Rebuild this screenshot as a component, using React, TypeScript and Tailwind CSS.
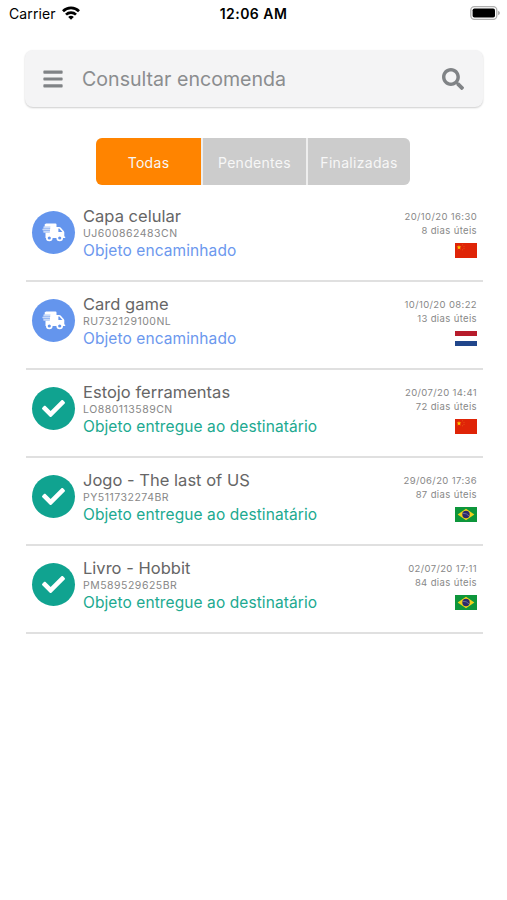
import { FaBars, FaCheck, FaSearch } from "react-icons/fa";

type Country = "CN" | "NL" | "BR";

interface Parcel {
  name: string;
  code: string;
  delivered: boolean;
  date: string;
  days: string;
  country: Country;
}

const parcels: Parcel[] = [
  { name: "Capa celular", code: "UJ600862483CN", delivered: false, date: "20/10/20 16:30", days: "8 dias úteis", country: "CN" },
  { name: "Card game", code: "RU732129100NL", delivered: false, date: "10/10/20 08:22", days: "13 dias úteis", country: "NL" },
  { name: "Estojo ferramentas", code: "LO880113589CN", delivered: true, date: "20/07/20 14:41", days: "72 dias úteis", country: "CN" },
  { name: "Jogo - The last of US", code: "PY511732274BR", delivered: true, date: "29/06/20 17:36", days: "87 dias úteis", country: "BR" },
  { name: "Livro - Hobbit", code: "PM589529625BR", delivered: true, date: "02/07/20 17:11", days: "84 dias úteis", country: "BR" },
];

function Flag({ country }: { country: Country }) {
  return (
    <svg viewBox="0 0 22 15" className="h-[15px] w-[22px]">
      {country === "CN" && (
        <>
          <rect width="22" height="15" fill="#df2407" />
          <path d="M4 2l.6 1.6h1.7L5 4.7l.5 1.7L4 5.4 2.5 6.4 3 4.7 1.7 3.6h1.7z" fill="#ffc800" />
          <g fill="#e8601a">
            <circle cx="7.6" cy="1.8" r=".5" />
            <circle cx="9" cy="3.2" r=".5" />
            <circle cx="9" cy="5.2" r=".5" />
            <circle cx="7.6" cy="6.8" r=".5" />
          </g>
        </>
      )}
      {country === "NL" && (
        <>
          <rect width="22" height="15" fill="#fff" />
          <rect width="22" height="5" fill="#b71c2c" />
          <rect y="10" width="22" height="5" fill="#21468b" />
        </>
      )}
      {country === "BR" && (
        <>
          <rect width="22" height="15" fill="#0d963b" />
          <path d="M11 1.7L19.4 7.5 11 13.3 2.6 7.5z" fill="#f0d01c" />
          <circle cx="11" cy="7.5" r="3.7" fill="#2b2a6c" />
          <path d="M7.8 6.3q3.8-.3 6.3 2.7" fill="none" stroke="#a9a9c8" strokeWidth=".5" />
        </>
      )}
    </svg>
  );
}

function TruckIcon() {
  return (
    <svg viewBox="0 0 24 19" className="h-[19px] w-[24px]" fill="#fff">
      <path d="M4 .5h9.5a1 1 0 0 1 1 1V4h2.7a2 2 0 0 1 1.4.6l3.1 3.3a2 2 0 0 1 .6 1.4v4.2h.3a.7.7 0 0 1 0 1.5H3.5V9.5L2.6 1.5z" />
      <path d="M.8 3.4h7.6l-.8 6.3H1z" fill="#6495ed" />
      <g opacity=".65">
        <rect x="1.4" y="3.3" width="7.6" height="1.9" rx=".8" />
        <rect x=".4" y="5.6" width="7.8" height="1.9" rx=".8" />
        <rect x="1.2" y="7.9" width="6.8" height="1.9" rx=".8" />
      </g>
      <path d="M16.4 5.6h.9l3.1 3.3h-4z" fill="#6495ed" />
      <circle cx="7.3" cy="15" r="3.3" />
      <circle cx="17.7" cy="15" r="3.3" />
      <circle cx="7.3" cy="15" r="1.6" fill="#6495ed" />
      <circle cx="17.7" cy="15" r="1.6" fill="#6495ed" />
    </svg>
  );
}

function StatusBar() {
  return (
    <header className="grid h-[27px] grid-cols-3 items-center pr-[7px] pl-[9px] text-black">
      <div className="flex items-center gap-[6px]">
        <span className="text-[14px] tracking-[0.1px]">Carrier</span>
        <svg viewBox="0 0 18 14" className="mb-[2px] h-[14px] w-[18px]" fill="none" stroke="#000" strokeWidth="2.7">
          <path d="M1 5.2a11.4 11.4 0 0 1 16 0" />
          <path d="M4 8.6a7.1 7.1 0 0 1 10 0" />
          <path d="M9 13.8L6.2 11a3.9 3.9 0 0 1 5.6 0z" fill="#000" stroke="none" />
        </svg>
      </div>
      <span className="-ml-[2px] text-center text-[14px] font-semibold tracking-[0.45px]">12:06 AM</span>
      <svg viewBox="0 0 30 14" className="mb-px h-[14px] w-[30px] justify-self-end">
        <rect x=".8" y=".7" width="26" height="12.6" rx="3.5" fill="#fff" stroke="#b0b0b0" strokeWidth="1.3" />
        <rect x="2.6" y="2.5" width="22.4" height="9" rx="1.8" fill="#000" />
        <path d="M28 4.8q2 .8 2 2.2t-2 2.2z" fill="#b0b0b0" />
      </svg>
    </header>
  );
}

function ParcelRow({ parcel }: { parcel: Parcel }) {
  return (
    <li className="flex h-[88px] border-b-2 border-[#e0e0e0] pt-[16px] pr-[6px] pl-[6px]">
      <div
        className={`mt-px flex size-[43px] items-center justify-center rounded-full text-white ${parcel.delivered ? "bg-[#10a390]" : "bg-[#6495ed]"}`}
      >
        {parcel.delivered ? <FaCheck className="size-[23px]" /> : <TruckIcon />}
      </div>
      <div className="ml-[8px] flex flex-1 flex-col whitespace-nowrap">
        <h2 className="-mt-[4px] text-[16.5px] leading-[21px] tracking-[0.02px] text-[#666]">{parcel.name}</h2>
        <span className="text-[10.5px] leading-[13px] tracking-[0.5px] text-[#888]">{parcel.code}</span>
        <span className={`text-[15.5px] leading-[21px] tracking-[0.09px] ${parcel.delivered ? "text-[#20a990]" : "text-[#6c98ee]"}`}>
          {parcel.delivered ? "Objeto entregue ao destinatário" : "Objeto encaminhado"}
        </span>
      </div>
      <div className="flex flex-col items-end text-[9.5px] leading-[14px] tracking-[0.37px] whitespace-nowrap text-[#888]">
        <span>{parcel.date}</span>
        <span>{parcel.days}</span>
        <div className="mt-[5px]">
          <Flag country={parcel.country} />
        </div>
      </div>
    </li>
  );
}

export default function App() {
  return (
    <div className="h-[900px] w-[507px] overflow-hidden bg-white font-['Inter',sans-serif]">
      <StatusBar />
      <div className="mx-[25px] mt-[23px] flex h-[57px] w-[458px] items-center rounded-[8px] bg-[#f4f4f5] pr-[19px] pl-[17px] text-[#808386] shadow-[0_1px_2px_rgba(0,0,0,0.2)]">
        <FaBars className="size-[22px]" />
        <span className="ml-[18px] flex-1 pt-[2px] text-[19.6px] text-[#8b8d8f]">Consultar encomenda</span>
        <FaSearch className="size-[22px]" />
      </div>
      <nav className="mt-[31px] ml-[96px] flex h-[47px] w-[314px] gap-[2px] overflow-hidden rounded-[6px] bg-[#eee] text-[14px] tracking-[0.3px] text-[#f7f7f7]">
        <button className="w-[105px] bg-[#ff8400] pt-[2px]">Todas</button>
        <button className="w-[103px] bg-[#ccc] pt-[2px]">Pendentes</button>
        <button className="flex-1 bg-[#ccc] pt-[2px]">Finalizadas</button>
      </nav>
      <ul className="mt-[9px] ml-[26px] w-[457px]">
        {parcels.map((parcel) => (
          <ParcelRow key={parcel.code} parcel={parcel} />
        ))}
      </ul>
    </div>
  );
}
